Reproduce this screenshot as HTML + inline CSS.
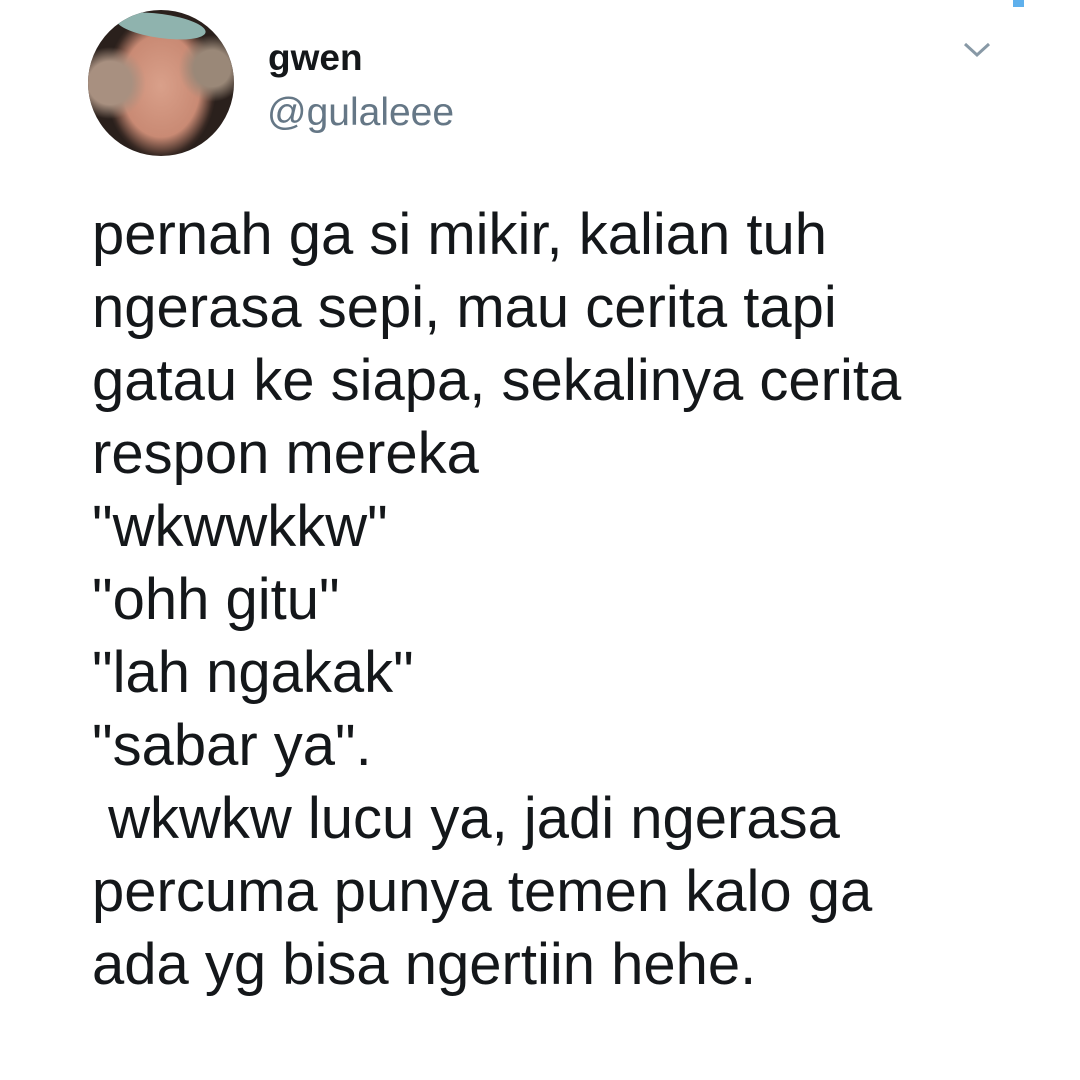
<!DOCTYPE html>
<html><head><meta charset="utf-8"><style>
body{margin:0;width:1080px;height:1080px;background:#fff;position:relative;overflow:hidden;font-family:"Liberation Sans",sans-serif}
.av{position:absolute;left:88px;top:10px;width:146px;height:146px;border-radius:50%;background:radial-gradient(ellipse 38% 50% at 50% 52%,#d9a08a 0%,#c98a74 70%,#3a2a24 95%,#2a201c 100%);overflow:hidden}
.av:before{content:"";position:absolute;left:0;top:0;width:146px;height:146px;background:radial-gradient(circle at 15% 50%,#a89080 0,#a89080 15%,transparent 25%),radial-gradient(circle at 85% 40%,#9a8878 0,#9a8878 12%,transparent 22%)}
.band{position:absolute;left:28px;top:4px;width:90px;height:24px;background:#8fb3ae;border-radius:50%;transform:rotate(8deg)}
.n{position:absolute;left:268px;top:37px;font-size:37px;font-weight:bold;color:#14171a}
.h{position:absolute;left:267px;top:91px;font-size:39px;color:#657786}
.t{position:absolute;left:92px;font-size:58px;color:#14171a;white-space:pre;line-height:1}
</style></head><body>
<div class="av"><div class="band"></div></div>
<div class="n">gwen</div>
<div class="h">@gulaleee</div>
<svg style="position:absolute;left:962px;top:40px" width="30" height="20"><path d="M3 4 L15 15 L27 4" fill="none" stroke="#8899a6" stroke-width="3"/></svg>
<div style="position:absolute;left:1013px;top:0;width:11px;height:7px;background:#5fb0ec"></div>
<div class="t" style="top:206px">pernah ga si mikir, kalian tuh</div>
<div class="t" style="top:279px">ngerasa sepi, mau cerita tapi</div>
<div class="t" style="top:352px">gatau ke siapa, sekalinya cerita</div>
<div class="t" style="top:425px">respon mereka</div>
<div class="t" style="top:498px">"wkwwkkw"</div>
<div class="t" style="top:571px">"ohh gitu"</div>
<div class="t" style="top:644px">"lah ngakak"</div>
<div class="t" style="top:717px">"sabar ya".</div>
<div class="t" style="top:790px"> wkwkw lucu ya, jadi ngerasa</div>
<div class="t" style="top:863px">percuma punya temen kalo ga</div>
<div class="t" style="top:936px">ada yg bisa ngertiin hehe.</div>
</body></html>
